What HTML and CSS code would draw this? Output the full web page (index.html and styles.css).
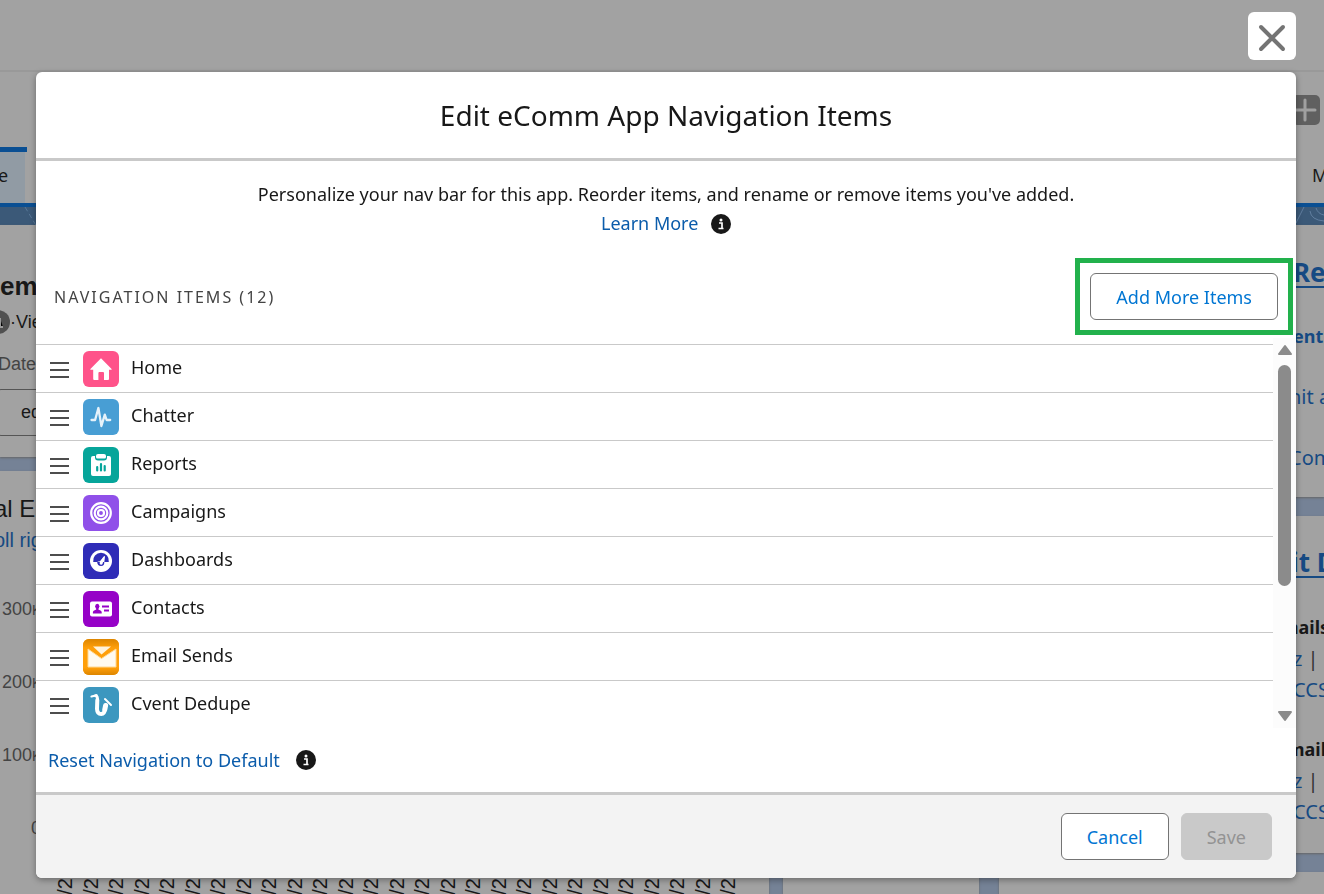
FILE: index.html
```html
<!DOCTYPE html>
<html lang="en">
<head>
  <meta charset="UTF-8">
  <meta name="viewport" content="width=device-width, initial-scale=1.0">
  <title>Edit eComm App Navigation Items</title>
  <link rel="stylesheet" href="styles.css">
</head>
<body>
  <!-- dimmed page behind the modal -->
  <div class="page" aria-hidden="true">
    <div class="global-header"></div>
    <div class="nav-bar">
      <span class="add-favorite">
        <svg width="24" height="30" viewBox="0 0 24 30"><path d="M-1 15h20M9 5v20" stroke="#a0a0a0" stroke-width="3" stroke-linecap="round"/></svg>
      </span>
      <div class="tabs">
        <span class="tab active">e</span>
        <span class="tab">M</span>
      </div>
    </div>
    <div class="brand-band">
      <svg width="100" height="18" viewBox="0 0 100 18"><path d="M25 0l12 20" stroke="#587797" stroke-width="1" stroke-dasharray="5 3"/></svg>
      <svg width="28" height="18" viewBox="0 0 28 18"><path d="M0 16L8 0M14 4q1 9 14 10M20 1q2 6 8 7" fill="none" stroke="#607e9f" stroke-width="1"/></svg>
    </div>
    <div class="content">
      <div class="column left">
        <div class="card filters">
          <b class="big">em</b>
          <div class="viewing"><svg width="10" height="24" viewBox="0 0 10 24"><circle cx="-2" cy="12" r="12" fill="#505050"/><path d="M0 8v9h3" stroke="#999" stroke-width="2"/></svg>·Vie</div>
          <div class="label">Date</div>
          <div class="filter">ed</div>
        </div>
        <div class="card chart">
          <div class="chart-title">al E</div>
          <div class="scroll-note">oll rig</div>
          <div class="axis-y">
            <span>300<small>K</small></span>
            <span>200<small>K</small></span>
            <span>100<small>K</small></span>
            <span class="zero">0</span>
          </div>
          <div class="axis-x">
            <span>/20</span><span>/20</span><span>/20</span><span>/20</span><span>/20</span><span>/20</span><span>/20</span><span>/20</span><span>/20</span>
            <span>/20</span><span>/20</span><span>/20</span><span>/20</span><span>/20</span><span>/20</span><span>/20</span><span>/20</span><span>/20</span>
            <span>/20</span><span>/20</span><span>/20</span><span>/20</span><span>/20</span><span>/20</span><span>/20</span><span>/20</span><span>/20</span>
          </div>
        </div>
      </div>
      <div class="column middle"><div class="card"></div></div>
      <div class="column right">
        <div class="card links">
          <b class="big underline">Re</b>
          <b class="group">ent</b>
          <span>hit a</span>
          <span>Com</span>
        </div>
        <div class="card emails">
          <b class="big underline">it D</b>
          <b class="dark">mails</b>
          <span>z <i>|</i> I</span>
          <span>CCS</span>
          <b class="dark next">mail</b>
          <span>z <i>|</i> I</span>
          <span>CCS</span>
        </div>
        <div class="card rest"></div>
      </div>
    </div>
  </div>

  <button class="close" aria-label="Close">
    <svg width="28" height="28" viewBox="0 0 28 28"><path d="M3 3l22 22M25 3L3 25" stroke="#747474" stroke-width="4" stroke-linecap="round"/></svg>
  </button>

  <div class="modal" role="dialog" aria-labelledby="modalTitle">
    <header class="modal-header">
      <h1 id="modalTitle">Edit eComm App Navigation Items</h1>
    </header>

    <div class="modal-body">
      <p class="intro">Personalize your nav bar for this app. Reorder items, and rename or remove items you've added.<br>
        <a href="#">Learn More</a>
        <svg class="info" width="20" height="20" viewBox="0 0 20 20"><circle cx="10" cy="10" r="10" fill="#181818"/><circle cx="10" cy="6" r="1.500" fill="#fff"/><path d="M8 9h3v5M7.500 14.500h5" fill="none" stroke="#fff" stroke-width="1.700"/></svg>
      </p>

      <div class="list-head">
        <h2>NAVIGATION ITEMS (12)</h2>
        <div class="highlight"><button class="btn">Add More Items</button></div>
      </div>

      <div class="list-wrap">
        <ul class="nav-items">
          <li>
            <span class="drag"></span>
            <svg class="icon home" viewBox="0 0 36 36"><path d="M18 7.200L28.600 18q.6.800-.4.800H26V28q0 1-1 1h-4v-7q0-1-1-1h-3.600q-1 0-1 1v7h-4.200q-1 0-1-1v-9.200H7.800q-1 0-.4-.8z"/></svg>
            <span>Home</span>
          </li>
          <li>
            <span class="drag"></span>
            <svg class="icon chatter" viewBox="0 0 36 36"><path d="M8.500 21h3.600l3.300-12 3 18 3.400-11.300 1.800 5.300h3.600" fill="none" stroke="#e6f2fa" stroke-width="2.300" stroke-linejoin="round" stroke-linecap="round"/></svg>
            <span>Chatter</span>
          </li>
          <li>
            <span class="drag"></span>
            <svg class="icon reports" viewBox="0 0 36 36"><path d="M10 9h2v1.500q0 3 3 3h6q3 0 3-3V9h2q2 0 2 2v16q0 2-2 2H10q-2 0-2-2V11q0-2 2-2z"/><path d="M15 7h6q2 0 2 2v1q0 1.500-1.500 1.500h-7Q13 11.500 13 10V9q0-2 2-2z"/><path d="M14.200 20v3.500M18 17.200v6.300M21.700 19v4.500" stroke="#06a59a" stroke-width="2.200" stroke-linecap="round"/></svg>
            <span>Reports</span>
          </li>
          <li>
            <span class="drag"></span>
            <svg class="icon campaigns" viewBox="0 0 36 36"><g fill="none" stroke="#fff" stroke-width="2.200"><circle cx="18" cy="18" r="9.800"/><circle cx="18" cy="18" r="6.300"/><circle cx="18" cy="18" r="3"/></g></svg>
            <span>Campaigns</span>
          </li>
          <li>
            <span class="drag"></span>
            <svg class="icon dashboards" viewBox="0 0 36 36"><circle cx="18" cy="18" r="11"/><path d="M10.200 19a7.900 7.900 0 1 1 15.600 0h-4.500l.7-5.500q-.6-1-1.300 0L17 18.200q-2 .2-2.800.8z" fill="#2f2cb7"/><path d="M14.200 19h7.100q.3 4-3.300 4t-3.800-4z" fill="#2f2cb7"/><path d="M21.300 13.500L19.700 20.500q-.8 1.700-2.300 1-1.400-.8-.5-2.400z"/></svg>
            <span>Dashboards</span>
          </li>
          <li>
            <span class="drag"></span>
            <svg class="icon contacts" viewBox="0 0 36 36"><rect x="7" y="10.500" width="22" height="15" rx="2"/><g fill="#9602c7"><ellipse cx="14.300" cy="15.300" rx="2.100" ry="2.600"/><path d="M13.200 16h2.200v2.600l2.500 1.200q.8.500.8 1.500v1.200h-8.800v-1.200q0-1 .8-1.500l2.500-1.200z"/><path d="M19 14.600h7v1.800h-7zM21 18.600h5v1.800h-5z"/></g></svg>
            <span>Contacts</span>
          </li>
          <li>
            <span class="drag"></span>
            <svg class="icon email" viewBox="0 0 36 36"><defs><linearGradient id="orange" x2="0" y2="1"><stop offset="0" stop-color="#dc8500"/><stop offset=".25" stop-color="#ff9f0a"/><stop offset=".8" stop-color="#ff9f0a"/><stop offset="1" stop-color="#dc8500"/></linearGradient></defs><rect width="36" height="36" fill="url(#orange)"/><path d="M5 10l13.500 9.500L33 10v18H5z" fill="#fffaf0" stroke="#ffd993"/><path d="M10 7.500h18l-9.500 8z" fill="#fff3dc"/></svg>
            <span>Email Sends</span>
          </li>
          <li>
            <span class="drag"></span>
            <svg class="icon cvent" viewBox="0 0 36 36"><g fill="none" stroke="#fff" stroke-linecap="round" stroke-linejoin="round"><path d="M8.500 9.500l5-1.300" stroke-width="2.200"/><path d="M12.500 8.800q2.200 0 2 4.200" stroke-width="3"/><path d="M14.300 13l-.3 9q.2 5 4.200 5 3.500 0 3.600-5" stroke-width="4"/><path d="M21.800 22.500l.8-4" stroke-width="5"/><path d="M22 12l6 6" stroke-width="2"/></g></svg>
            <span>Cvent Dedupe</span>
          </li>
        </ul>
        <div class="scrollbar">
          <svg width="16" height="12" viewBox="0 0 16 12"><path d="M8 2l6 8H2z" fill="#8b8b8b" stroke="#8b8b8b" stroke-width="2" stroke-linejoin="round"/></svg>
          <span class="thumb"></span>
          <svg width="16" height="12" viewBox="0 0 16 12"><path d="M8 10l6-8H2z" fill="#8b8b8b" stroke="#8b8b8b" stroke-width="2" stroke-linejoin="round"/></svg>
        </div>
      </div>

      <div class="reset">
        <a href="#">Reset Navigation to Default</a>
        <svg class="info" width="20" height="20" viewBox="0 0 20 20"><circle cx="10" cy="10" r="10" fill="#181818"/><circle cx="10" cy="6" r="1.500" fill="#fff"/><path d="M8 9h3v5M7.500 14.500h5" fill="none" stroke="#fff" stroke-width="1.700"/></svg>
      </div>
    </div>

    <footer class="modal-footer">
      <button class="btn">Cancel</button>
      <button class="btn save" disabled>Save</button>
    </footer>
  </div>
</body>
</html>
```
FILE: styles.css
```css
* {
  box-sizing: border-box;
}
body {
  margin: 0;
  font-family: "Noto Sans", "Open Sans", sans-serif;
  font-size: 18px;
  color: #181818;
  background: #a2a2a2;
}
a {
  color: #0b5cab;
  text-decoration: none;
}

/* page behind */
.page {
  display: flex;
  flex-direction: column;
  height: 100vh;
  overflow: hidden;
  white-space: nowrap;
}
.global-header {
  flex: none;
  height: 72px;
  border-bottom: 2px solid #999;
}
.nav-bar {
  flex: none;
  display: flex;
  flex-direction: column;
  height: 135px;
  padding-top: 23px;
  border-bottom: 4px solid #0a4f93;
}
.add-favorite {
  align-self: flex-end;
  width: 28px;
  height: 30px;
  margin-right: 4px;
  background: #606060;
  border-radius: 5px;
}
.add-favorite svg {
  display: block;
  margin-left: 4px;
}
.tabs {
  flex: 1;
  display: flex;
  justify-content: space-between;
  margin-top: 22px;
}
.tab {
  width: 12px;
  line-height: 56px;
}
.tab.active {
  width: 27px;
  line-height: 46px;
  text-indent: -2px;
  border-top: 5px solid #0a4f93;
  background: linear-gradient(90deg, #919ba4 25px, #a2a2a2 25px);
}
.brand-band {
  flex: none;
  display: flex;
  justify-content: space-between;
  height: 18px;
  background: #3b5978;
}
.content {
  flex: 1;
  display: flex;
  min-height: 0;
  background: #758296;
}
.column {
  display: flex;
  flex-direction: column;
  min-width: 0;
}
.left {
  flex: 769;
  gap: 14px;
  margin-right: 14px;
  font-family: "Liberation Sans", Arial, sans-serif;
}
.middle {
  flex: 196;
  margin-right: 20px;
}
.right {
  flex: 325;
  gap: 19px;
}
.card {
  display: flex;
  flex-direction: column;
  overflow: hidden;
  background: #a2a2a2;
  box-shadow: 0 1px 2px #666;
}
.middle .card {
  flex: 1;
}
.filters {
  height: 232px;
  padding-top: 45px;
}
.big {
  font-size: 26px;
  line-height: 32px;
}
.viewing {
  display: flex;
  align-items: center;
  height: 40px;
}
.label {
  color: #444;
  line-height: 44px;
  text-indent: -2px;
}
.filter {
  height: 47px;
  margin: 3px 20px 0 -4px;
  padding-left: 24px;
  line-height: 45px;
  border: 1px solid #555;
  border-radius: 5px;
}
.chart {
  flex: 1;
  padding-top: 22px;
}
.chart-title {
  font-size: 24px;
  line-height: 32px;
  text-indent: -6px;
}
.scroll-note {
  font-size: 20px;
  line-height: 30px;
  color: #164a83;
  text-indent: -6px;
}
.axis-y {
  display: flex;
  flex-direction: column;
  gap: 51px;
  padding: 44px 0 0 2px;
  line-height: 21px;
  color: #444;
}
.axis-y small {
  font-size: 14px;
}
.axis-y .zero {
  padding-left: 29px;
}
.axis-x {
  display: flex;
  justify-content: space-between;
  margin: 28px 31px 0 55px;
  font-size: 20px;
}
.axis-x span {
  writing-mode: vertical-rl;
  transform: rotate(180deg);
  line-height: 20px;
}
.links,
.emails {
  padding-left: 294px;
  color: #164a83;
}
.links {
  height: 272px;
  padding-top: 31px;
}
.emails {
  height: 337px;
  padding-top: 30px;
  line-height: 31px;
}
.underline {
  text-decoration: underline;
  text-underline-offset: 4px;
}
.emails .underline {
  text-indent: -2px;
}
.links .group {
  margin-top: 32px;
  line-height: 32px;
}
.links span {
  line-height: 32px;
  margin-top: 29px;
  text-indent: -4px;
}
.links span,
.emails span {
  font-size: 20px;
}
.dark {
  color: #181818;
  margin-top: 34px;
  text-indent: -12px;
}
.emails .next {
  margin-top: 29px;
  text-indent: -6px;
}
.emails i {
  font-style: normal;
  color: #333;
}
.rest {
  flex: 1;
}

/* close */
.close {
  position: fixed;
  top: 12px;
  right: 28px;
  display: flex;
  align-items: center;
  justify-content: center;
  width: 48px;
  height: 48px;
  padding: 4px 0 0;
  background: #fff;
  border: none;
  border-radius: 6px;
}

/* modal */
.modal {
  position: fixed;
  top: 72px;
  right: 28px;
  bottom: 16px;
  left: 36px;
  display: flex;
  flex-direction: column;
  background: #fff;
  border-radius: 6px;
  box-shadow: 0 2px 6px rgba(0, 0, 0, 0.35);
}
.modal-header {
  padding: 24px;
  border-bottom: 3px solid #c9c9c9;
}
h1 {
  margin: 0;
  font-size: 28px;
  font-weight: 400;
  line-height: 38px;
  text-align: center;
}
.modal-body {
  flex: 1;
  display: flex;
  flex-direction: column;
}
.intro {
  margin: 19px 0 20px;
  line-height: 29px;
  text-align: center;
}
.info {
  margin-left: 8px;
  vertical-align: -4px;
}
.list-head {
  display: flex;
  align-items: center;
  justify-content: space-between;
  padding: 0 3px 0 18px;
}
h2 {
  margin: 0;
  font-size: 16px;
  font-weight: 400;
  color: #444;
  letter-spacing: 2px;
}
.highlight {
  padding: 10px;
  border: 5px solid #22b14c;
}
.btn {
  height: 47px;
  padding: 0 25px;
  font: inherit;
  color: #0176d3;
  background: #fff;
  border: 1px solid #747474;
  border-radius: 6px;
}
.list-wrap {
  display: flex;
  margin-top: 3px;
}
.nav-items {
  flex: 1;
  margin: 6px 0 0;
  padding: 0;
  list-style: none;
}
.nav-items li {
  display: flex;
  align-items: center;
  gap: 12px;
  height: 48px;
  padding-left: 14px;
  border-top: 1px solid #c9c9c9;
}
.nav-items li span:last-child {
  padding-bottom: 4px;
}
.drag {
  width: 19px;
  height: 16px;
  margin: 2px 2px 0 0;
  border-top: 2px solid #4d4d4d;
  border-bottom: 2px solid #4d4d4d;
  background: linear-gradient(#4d4d4d, #4d4d4d) center / 100% 2px no-repeat;
}
.icon {
  width: 36px;
  height: 36px;
  border-radius: 6px;
  fill: #fff;
}
.home { background: #ff538a; }
.chatter { background: #489ed4; }
.reports { background: #06a59a; }
.campaigns { background: #9050e9; }
.dashboards { background: #2f2cb7; }
.contacts { background: #9602c7; }
.email { background: #ff9f0a; }
.cvent { background: #3c97bf; }

.scrollbar {
  display: flex;
  flex-direction: column;
  align-items: center;
  width: 23px;
  padding: 6px 0;
  background: #fcfcfc;
}
.thumb {
  width: 13px;
  height: 221px;
  margin: 9px 0 auto;
  background: #8b8b8b;
  border-radius: 7px;
}
.reset {
  flex: 1;
  display: flex;
  align-items: center;
  gap: 8px;
  padding-left: 12px;
}
.modal-footer {
  display: flex;
  justify-content: flex-end;
  gap: 12px;
  padding: 18px 24px;
  background: #f3f3f3;
  border-top: 3px solid #c9c9c9;
  border-radius: 0 0 6px 6px;
}
.save {
  color: #939393;
  background: #c9c9c9;
  border-color: #c9c9c9;
}
```
